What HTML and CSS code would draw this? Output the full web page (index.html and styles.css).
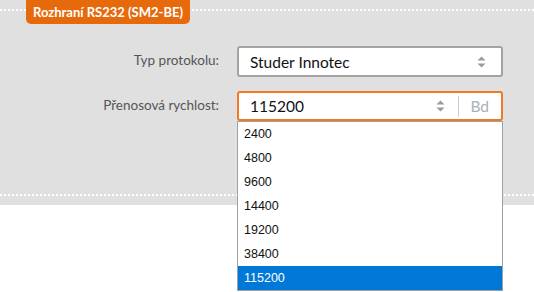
FILE: index.html
```html
<!DOCTYPE html>
<html lang="cs">
<head>
<meta charset="utf-8">
<title>Rozhraní RS232</title>
<link rel="stylesheet" href="styles.css">
</head>
<body>
<div class="panel">
  <div class="tab">Rozhraní RS232 (SM2-BE)</div>
  <div class="frame">
    <div class="form">
      <label class="label">Typ protokolu:</label>
      <div class="select">
        <span class="value">Studer Innotec</span>
        <svg class="arrows" width="9" height="12" viewBox="0 0 9 12"><path d="M4.5 0.5 L8.5 4.5 L0.5 4.5 Z M0.5 7.5 L8.5 7.5 L4.5 11.5 Z" fill="#9a9a9a"/></svg>
      </div>
      <label class="label">Přenosová rychlost:</label>
      <div class="select active">
        <span class="value">115200</span>
        <svg class="arrows" width="9" height="12" viewBox="0 0 9 12"><path d="M4.5 0.5 L8.5 4.5 L0.5 4.5 Z M0.5 7.5 L8.5 7.5 L4.5 11.5 Z" fill="#9a9a9a"/></svg>
        <span class="sep"></span>
        <span class="unit">Bd</span>
        <ul class="list">
          <li>2400</li>
          <li>4800</li>
          <li>9600</li>
          <li>14400</li>
          <li>19200</li>
          <li>38400</li>
          <li class="selected">115200</li>
        </ul>
      </div>
    </div>
  </div>
</div>
</body>
</html>
```
FILE: styles.css
```css
html, body {
  margin: 0;
  padding: 0;
  background: #ffffff;
  font-family: Lato, "Open Sans", sans-serif;
}
body {
  min-height: 292px;
}
.panel {
  position: relative;
  background: #e0e0e0;
  padding: 9px 0;
  height: 205px;
  box-sizing: border-box;
}
.tab {
  position: absolute;
  left: 26px;
  top: 0;
  width: 164px;
  height: 24px;
  background: #e66a0c;
  color: #ffffff;
  border-radius: 0 0 5px 5px;
  font-size: 13px;
  font-weight: bold;
  line-height: 24px;
  text-align: center;
}
.frame {
  border-top: 2px dotted #ffffff;
  border-bottom: 2px dotted #ffffff;
  height: 183px;
}
.form {
  display: grid;
  grid-template-columns: 219px 266px;
  column-gap: 18px;
  row-gap: 14px;
  padding-top: 35px;
}
.label {
  justify-self: end;
  color: #555555;
  font-size: 13.5px;
  line-height: 16px;
  padding-top: 6px;
}
.select {
  position: relative;
  box-sizing: border-box;
  height: 31px;
  border: 2px solid #a3a3a3;
  border-radius: 3px;
  background: #ffffff;
  display: flex;
  align-items: center;
  padding: 0 15px 0 11px;
}
.select.active {
  height: 30px;
  border-color: #ee7a22;
  padding-right: 12px;
}
.value {
  flex: 1;
  color: #111111;
  font-size: 15.5px;
}
.arrows {
  display: block;
}
.sep {
  width: 1px;
  height: 21px;
  background: #cccccc;
  margin: 0 11px 0 13px;
}
.unit {
  color: #a9b0b8;
  font-size: 15.5px;
}
.list {
  position: absolute;
  left: -2px;
  right: -2px;
  top: 28px;
  margin: 0;
  padding: 0;
  list-style: none;
  background: #ffffff;
  border: 1px solid #a0a0a0;
  font-family: "Liberation Sans", Arial, sans-serif;
  font-size: 12.5px;
  color: #111111;
  z-index: 2;
}
.list li {
  height: 24px;
  line-height: 25px;
  padding-left: 6px;
}
.list li.selected {
  background: #0078d7;
  color: #ffffff;
}
```
